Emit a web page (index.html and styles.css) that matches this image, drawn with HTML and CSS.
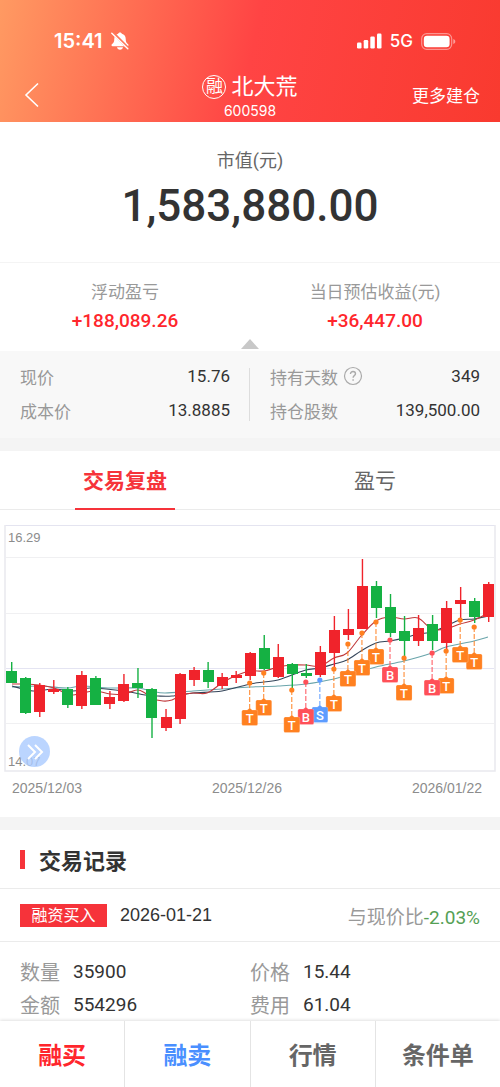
FILE: index.html
```html
<!DOCTYPE html>
<html lang="zh-CN">
<head>
  <meta charset="UTF-8">
  <meta name="viewport" content="width=device-width, initial-scale=1.0">
  <title>北大荒 600598</title>
  <link rel="stylesheet" href="styles.css">
</head>
<body>
  <div class="page">
    <header class="header">
      <div class="status-bar">
        <div class="status-left">
          <span class="status-time">15:41</span>
          <svg width="18" height="18" viewBox="0 0 18 18" aria-hidden="true">
            <path d="M9 .4c1 0 1.700.6 1.800 1.300 2.500.7 3.900 2.500 3.900 5 0 3 .8 4.300 2.400 5.600.8.7.4 1.900-.7 1.900H1.600c-1.100 0-1.500-1.200-.7-1.900C2.500 11 3.300 9.700 3.300 6.700c0-2.500 1.400-4.300 3.900-5C7.300 1 8 .4 9 .4z" fill="#fff"/>
            <path d="M6 15.300h6c-.3 1.600-1.400 2.400-3 2.400s-2.700-.8-3-2.400z" fill="#fff"/>
            <path d="M1.800.8l15.500 15.500" stroke="#ff7558" stroke-width="3"/>
            <path d="M.8 1.200l16 15.600" stroke="#fff" stroke-width="1.400" stroke-linecap="round"/>
          </svg>
        </div>
        <div class="status-right">
          <svg width="25" height="16" viewBox="0 0 25 16" aria-hidden="true" fill="#fff">
            <rect x="0" y="9.500" width="4.500" height="6" rx="1.200"/>
            <rect x="6.700" y="7" width="4.500" height="8.500" rx="1.200"/>
            <rect x="13.300" y="3.500" width="4.500" height="12" rx="1.200"/>
            <rect x="20" y="0.500" width="4.500" height="15" rx="1.200"/>
          </svg>
          <span class="status-network">5G</span>
          <svg width="35" height="17" viewBox="0 0 35 17" aria-hidden="true">
            <rect x="0.700" y="0.700" width="30" height="15.600" rx="5" fill="none" stroke="#fff" stroke-opacity=".45" stroke-width="1.200"/>
            <rect x="2.800" y="2.800" width="25.800" height="11.400" rx="3.200" fill="#fff"/>
            <path d="M32.300 6v5c1.400-.5 2-1.500 2-2.500s-.6-2-2-2.500z" fill="#fff" fill-opacity=".5"/>
          </svg>
        </div>
      </div>
      <div class="nav">
        <button class="nav-back" type="button" aria-label="返回">
          <svg width="16" height="26" viewBox="0 0 16 26"><path d="M14 1.500L2 13l12 11.500" fill="none" stroke="#fff" stroke-width="1.600"/></svg>
        </button>
        <div class="nav-title">
          <h1><span class="badge">融</span>北大荒</h1>
          <p>600598</p>
        </div>
        <a class="nav-more" href="#">更多建仓</a>
      </div>
    </header>

    <section class="market-value">
      <p class="label">市值(元)</p>
      <p class="amount">1,583,880.00</p>
    </section>

    <section class="profit">
      <div class="profit-item">
        <p class="profit-label">浮动盈亏</p>
        <p class="profit-value">+188,089.26</p>
      </div>
      <div class="profit-item">
        <p class="profit-label">当日预估收益(元)</p>
        <p class="profit-value">+36,447.00</p>
      </div>
      <span class="arrow-up"></span>
    </section>

    <section class="stats">
      <dl class="stats-col">
        <div><dt>现价</dt><dd>15.76</dd></div>
        <div><dt>成本价</dt><dd>13.8885</dd></div>
      </dl>
      <dl class="stats-col">
        <div>
          <dt>持有天数
            <svg class="help" width="20" height="20" viewBox="0 0 20 20" aria-hidden="true" fill="none" stroke="#aaa">
              <circle cx="10" cy="10" r="8.500" stroke-width="1.200"/>
              <path d="M7.500 8c0-1.600 1-2.500 2.500-2.500s2.500.9 2.500 2.200c0 1.800-2.400 1.900-2.400 4.100M10.100 13.200v1.500" stroke-width="1.400"/>
            </svg>
          </dt>
          <dd>349</dd>
        </div>
        <div><dt>持仓股数</dt><dd>139,500.00</dd></div>
      </dl>
    </section>

    <nav class="tabs">
      <button class="tab active" type="button"><span>交易复盘</span></button>
      <button class="tab" type="button"><span>盈亏</span></button>
    </nav>

    <section class="chart">
      <div class="chart-plot">
        <svg id="kline" viewBox="0 4 500 248" role="img" aria-label="K线图"></svg>
        <button class="chart-toggle" type="button" aria-label="展开">
          <svg width="18" height="18" viewBox="0 0 18 18"><path d="M2 2l7 7-7 7M9 2l7 7-7 7" fill="none" stroke="#fff" stroke-width="2"/></svg>
        </button>
      </div>
      <div class="chart-dates">
        <span>2025/12/03</span>
        <span>2025/12/26</span>
        <span>2026/01/22</span>
      </div>
    </section>

    <section class="records">
      <h2 class="records-title">交易记录</h2>
      <div class="record-head">
        <span class="tag">融资买入</span>
        <time class="record-date" datetime="2026-01-21">2026-01-21</time>
        <span class="record-diff">与现价比<b>-2.03%</b></span>
      </div>
      <dl class="record-body">
        <div><dt>数量</dt><dd>35900</dd></div>
        <div><dt>价格</dt><dd>15.44</dd></div>
        <div><dt>金额</dt><dd>554296</dd></div>
        <div><dt>费用</dt><dd>61.04</dd></div>
      </dl>
    </section>

    <footer class="actions">
      <button class="action buy" type="button">融买</button>
      <button class="action sell" type="button">融卖</button>
      <button class="action" type="button">行情</button>
      <button class="action" type="button">条件单</button>
    </footer>
  </div>
  <script src="chart.js"></script>
</body>
</html>
```
FILE: styles.css
```css
:root {
  --red: #f6333a;
  --text: #333;
  --text-mid: #666;
  --text-light: #999;
  --line: #ebebeb;
  --gap-bg: #f4f4f4;
}

* {
  box-sizing: border-box;
}

body {
  margin: 0;
  font-family: Roboto, 'Noto Sans CJK SC', sans-serif;
  color: var(--text);
  background-color: #fff;
}

h1, h2, p, dl, dd {
  margin: 0;
}

button {
  font-family: inherit;
  border: 0;
  padding: 0;
  background: none;
}

.page {
  display: flex;
  flex-direction: column;
  min-height: 100vh;
}

/* header */
.header {
  height: 122px;
  color: #fff;
  background: linear-gradient(102deg, #ff9a62 0%, #ff4444 50%, #f93a2f 100%);
}

.status-bar {
  display: flex;
  justify-content: space-between;
  align-items: center;
  height: 70px;
  padding: 12px 44px 0 54px;
}

.status-left,
.status-right {
  display: flex;
  align-items: center;
}

.status-left {
  gap: 8px;
}

.status-right {
  gap: 8px;
}

.status-time {
  font-family: Inter, sans-serif;
  font-size: 20px;
  font-weight: 600;
}

.status-network {
  font-family: Inter, sans-serif;
  font-size: 17px;
  font-weight: 500;
}

.nav {
  display: grid;
  grid-template-columns: 1fr auto 1fr;
  align-items: center;
  height: 50px;
  padding: 0 20px;
}

.nav-back {
  justify-self: start;
  height: 26px;
  padding-left: 4px;
}

.nav-title {
  text-align: center;
}

.nav-title h1 {
  display: flex;
  align-items: center;
  gap: 5px;
  font-size: 22px;
  font-weight: 400;
  line-height: 32px;
}

.nav-title p {
  font-family: Inter, sans-serif;
  font-size: 14px;
  line-height: 16px;
}

.badge {
  width: 24px;
  height: 24px;
  border: 1px solid #fff;
  border-radius: 50%;
  font-size: 17px;
  line-height: 21px;
}

.nav-more {
  justify-self: end;
  padding-bottom: 2px;
  font-size: 17px;
  color: #fff;
  text-decoration: none;
}

/* market value */
.market-value {
  height: 141px;
  padding-top: 26px;
  text-align: center;
  border-bottom: 1px solid #f4f4f4;
}

.market-value .label {
  font-size: 18px;
  line-height: 26px;
  color: var(--text-mid);
}

.amount {
  font-size: 44px;
  font-weight: 500;
  line-height: 64px;
}

.profit {
  position: relative;
  display: flex;
  height: 88px;
  padding-top: 16px;
}

.profit-item {
  flex: 1;
  text-align: center;
}

.profit-label {
  font-size: 17px;
  line-height: 26px;
  color: var(--text-light);
}

.profit-value {
  font-size: 19px;
  font-weight: 500;
  line-height: 32px;
  color: #ff262c;
}

.arrow-up {
  position: absolute;
  left: 50%;
  bottom: 2px;
  margin-left: -9px;
  border: 9px solid transparent;
  border-top: 0;
  border-bottom: 10px solid #c8c8c8;
}

/* stats */
.stats {
  display: flex;
  padding: 8px 0 11px;
  background-color: #f8f8f8;
  border-bottom: 13px solid var(--gap-bg);
}

.stats-col {
  flex: 1;
  padding: 0 20px;
  background: linear-gradient(#ddd, #ddd) no-repeat right 9px / 1px 53px;
}

.stats-col:last-child {
  background: none;
}

.stats-col div {
  display: flex;
  justify-content: space-between;
  align-items: center;
  height: 34px;
}

.stats-col dt {
  display: flex;
  align-items: center;
  gap: 5px;
  font-size: 17px;
  color: var(--text-light);
}

.stats-col dd {
  font-size: 17px;
}

/* tabs */
.tabs {
  display: flex;
  height: 59px;
  border-bottom: 1px solid var(--line);
}

.tab {
  flex: 1;
  font-size: 21px;
  color: var(--text-mid);
}

.tab span {
  display: inline-block;
  min-width: 100px;
  height: 59px;
  line-height: 60px;
}

.tab.active {
  font-weight: 700;
  color: var(--red);
}

.tab.active span {
  border-bottom: 2px solid var(--red);
}

/* chart */
.chart {
  padding-top: 14px;
  border-bottom: 13px solid var(--gap-bg);
}

.chart-plot {
  position: relative;
}

.chart-plot > svg {
  display: block;
  width: 100%;
}

.chart-plot .price {
  font-family: 'Liberation Sans', sans-serif;
  font-size: 13px;
  fill: #8c8c8c;
}

.chart-plot .trade {
  font-size: 13px;
  font-weight: 500;
  fill: #fff;
  text-anchor: middle;
}

.chart-toggle {
  position: absolute;
  left: 19px;
  bottom: 5px;
  display: flex;
  align-items: center;
  justify-content: center;
  width: 31px;
  height: 31px;
  border-radius: 50%;
  background-color: rgba(170, 202, 255, 0.8);
}

.chart-dates {
  display: flex;
  justify-content: space-between;
  padding: 5px 18px 18px 12px;
  font-family: 'Liberation Sans', sans-serif;
  font-size: 14px;
  line-height: 22px;
  color: #8c8c8c;
}

/* records */
.records-title {
  display: flex;
  align-items: center;
  gap: 14px;
  height: 59px;
  padding: 0 20px;
  font-size: 22px;
  border-bottom: 1px solid var(--line);
}

.records-title::before {
  content: '';
  width: 5px;
  height: 19px;
  background-color: var(--red);
}

.record-head {
  display: flex;
  align-items: center;
  height: 53px;
  padding: 0 20px;
  border-bottom: 1px solid var(--line);
}

.tag {
  width: 87px;
  font-size: 16px;
  line-height: 23px;
  text-align: center;
  color: #fff;
  background-color: var(--red);
}

.record-date {
  margin-left: 13px;
  font-family: 'Liberation Sans', sans-serif;
  font-size: 18px;
}

.record-diff {
  margin-left: auto;
  font-size: 19px;
  color: var(--text-light);
}

.record-diff b {
  font-weight: 400;
  color: #55a055;
}

.record-body {
  display: grid;
  grid-template-columns: 1fr 1fr;
  padding: 13px 0 0 20px;
  margin-right: 20px;
}

.record-body div {
  display: flex;
  align-items: center;
  gap: 13px;
  height: 33px;
}

.record-body dt {
  font-size: 20px;
  color: var(--text-light);
}

.record-body dd {
  font-size: 19px;
}

/* bottom buttons */
.actions {
  position: sticky;
  bottom: 0;
  display: flex;
  height: 67px;
  margin-top: auto;
  background-color: #fff;
  border-bottom: 1px solid var(--line);
  box-shadow: 0 -1px 3px rgba(0, 0, 0, 0.12);
}

.action {
  flex: 1;
  padding-bottom: 2px;
  font-size: 24px;
  font-weight: 700;
  color: var(--text-mid);
  border-right: 1px solid #e4e4e4;
}

.action:last-child {
  border-right: 0;
}

.action.buy {
  color: #ff262c;
}

.action.sell {
  color: #4a8fff;
}
```
FILE: chart.js
```js
const UP = '#f0232b';
const DOWN = '#15b143';
const STEP = 14.03;
const START = 11.7;

// [color, high, low, body top, body bottom]
const candles = [
  [DOWN, 142, 163, 151, 163], [DOWN, 157, 194, 158, 193], [UP, 163, 197, 165, 192],
  [UP, 160, 174, 169, 172], [DOWN, 167, 188, 169, 185], [UP, 151, 189, 155, 186],
  [DOWN, 156, 185, 158, 185], [UP, 171, 189, 177, 184], [UP, 154, 182, 164, 181],
  [DOWN, 148, 178, 163, 168], [DOWN, 168, 218, 169, 198], [UP, 189, 211, 197, 208],
  [UP, 153, 204, 154, 199], [UP, 147, 166, 150, 160], [DOWN, 142, 168, 150, 162],
  [UP, 153, 169, 157, 166], [UP, 151, 163, 155, 158], [UP, 132, 160, 133, 156],
  [DOWN, 115, 150, 128, 149], [UP, 124, 158, 137, 157], [DOWN, 143, 168, 144, 154],
  [DOWN, 144, 158, 153, 156], [UP, 126, 157, 132, 155], [UP, 96, 148, 110, 133],
  [UP, 89, 120, 109, 115], [UP, 39, 109, 66, 109], [DOWN, 61, 98, 66, 88],
  [DOWN, 74, 117, 87, 113], [DOWN, 96, 136, 111, 121], [UP, 95, 126, 108, 121],
  [DOWN, 95, 130, 104, 121], [UP, 81, 130, 88, 123], [UP, 67, 98, 80, 84],
  [DOWN, 78, 103, 81, 97], [UP, 62, 102, 64, 97]
];

// [candle index, type, dot y]
const trades = [
  [17, 'T', 163], [18, 'T', 153], [20, 'T', 170], [21, 'B', 162], [22, 'S', 160],
  [23, 'T', 149], [24, 'T', 124], [25, 'T', 113], [26, 'T', 102], [27, 'B', 120],
  [28, 'T', 138], [30, 'B', 133], [31, 'T', 131], [32, 'T', 100], [33, 'T', 107]
];
const tradeColors = { T: '#ff8020', B: '#ff5058', S: '#5c9cff' };

const averages = [
  ['#6aa5ab', [[12, 167], [40, 166], [67, 168], [82, 166], [110, 168], [137, 168], [151, 171], [165, 173], [193, 171], [222, 169], [250, 167], [278, 166], [306, 164], [334, 159], [347, 155], [376, 147], [404, 141], [432, 133], [446, 127], [474, 121], [488, 117]]],
  ['#34455a', [[12, 166], [33, 171], [54, 169], [73, 171], [90, 168], [124, 171], [145, 175], [158, 176], [172, 176], [193, 173], [222, 171], [250, 164], [264, 162], [278, 160], [292, 155], [306, 150], [320, 148], [334, 144], [347, 140], [361, 131], [376, 123], [390, 121], [404, 118], [418, 114], [432, 112], [446, 106], [460, 100], [474, 99], [488, 96]]],
  ['#c0393b', [[12, 164], [26, 164], [39, 165], [54, 168], [65, 173], [73, 175], [82, 173], [96, 171], [110, 174], [124, 174], [137, 170], [145, 173], [151, 178], [163, 181], [172, 180], [182, 175], [193, 173], [207, 173], [222, 163], [235, 156], [250, 151], [264, 151], [278, 147], [292, 145], [306, 145], [320, 146], [334, 138], [347, 133], [361, 116], [376, 101], [390, 97], [404, 99], [418, 98], [432, 109], [446, 109], [460, 104], [474, 100], [488, 93]]]
];

function smoothPath(points) {
  let d = `M${points[0][0]} ${points[0][1]}`;
  for (let i = 0; i < points.length - 1; i++) {
    const p0 = points[i - 1] || points[i];
    const p1 = points[i];
    const p2 = points[i + 1];
    const p3 = points[i + 2] || p2;
    d += ` C${p1[0] + (p2[0] - p0[0]) / 6} ${p1[1] + (p2[1] - p0[1]) / 6}`;
    d += ` ${p2[0] - (p3[0] - p1[0]) / 6} ${p2[1] - (p3[1] - p1[1]) / 6} ${p2[0]} ${p2[1]}`;
  }
  return d;
}

let out = '';

[37, 93, 148, 203].forEach((y) => {
  out += `<path d="M6 ${y + 0.5}H494" stroke="${y === 148 ? '#e4e4f2' : '#f0f0f2'}"/>`;
});
out += '<path d="M5 5.500H495" stroke="#e4e4f0"/>';
out += '<path d="M5 5V251H495V5" fill="none" stroke="#e9e9ee" stroke-width="1.500"/>';
out += '<text class="price" x="8" y="22">16.29</text><text class="price" x="8" y="246">14.07</text>';

averages.forEach(([color, points]) => {
  out += `<path d="${smoothPath(points)}" fill="none" stroke="${color}" stroke-width="1.100"/>`;
});

candles.forEach(([color, high, low, top, bottom], i) => {
  const x = START + STEP * i;
  out += `<path d="M${x} ${high}V${low}" stroke="${color}" stroke-width="1.400"/>`;
  out += `<rect x="${Math.round(x - 5.5)}" y="${top}" width="11" height="${bottom - top}" fill="${color}"/>`;
});

trades.reverse().forEach(([index, type, y]) => {
  const x = START + STEP * index - 0.5;
  const color = tradeColors[type];
  out += `<path d="M${x} ${y}v26" stroke="${color}" stroke-width="1" stroke-dasharray="5 2"/>`;
  out += `<circle cx="${x}" cy="${y}" r="2.600" fill="${color}"/>`;
  out += `<path d="M${x - 6.5} ${y + 27}h4l2.500-2 2.500 2h4q1.500 0 1.500 1.500v12.500q0 1.500-1.500 1.500h-13q-1.500 0-1.500-1.500v-12.500q0-1.500 1.500-1.500z" fill="${color}" stroke="#fff" stroke-opacity=".4" stroke-width=".5"/>`;
  out += `<text class="trade" x="${x}" y="${y + 39.5}">${type}</text>`;
});

document.getElementById('kline').innerHTML = out;
```
